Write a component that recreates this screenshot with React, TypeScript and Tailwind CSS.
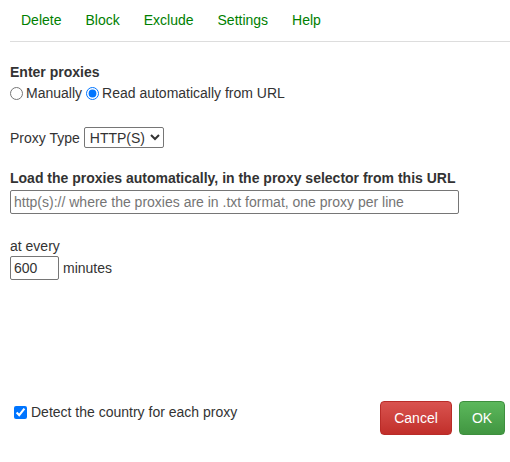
import React, { useState } from 'react';

const menu = ['Delete', 'Block', 'Exclude', 'Settings', 'Help'];

export default function App() {
  const [mode, setMode] = useState<'manual' | 'url'>('url');
  const [type, setType] = useState('HTTP(S)');
  const [url, setUrl] = useState('');
  const [minutes, setMinutes] = useState('600');
  const [detect, setDetect] = useState(true);

  return (
    <div className="w-[510px] h-[462px] bg-white text-[14px] text-[#333] font-['Liberation_Sans',Arial,sans-serif] leading-[20px]">
      {/* top menu */}
      <div className="ml-[10px] border-b border-[#ddd] h-[42px] flex items-center pl-[11px] gap-[24px] pb-[2px]">
        {menu.map((m) => (
          <a key={m} href="#" className="text-[#008000] hover:underline" onClick={(e) => e.preventDefault()}>
            {m}
          </a>
        ))}
      </div>

      <div className="pl-[10px] pr-[5px]">
        <div className="mt-[20px] font-bold">Enter proxies</div>
        <div className="flex items-center h-[20px] mt-[1px]">
          <label className="flex items-center">
            <input
              type="radio"
              name="mode"
              className="m-0 w-[13px] h-[13px]"
              checked={mode === 'manual'}
              onChange={() => setMode('manual')}
            />
            <span className="ml-[3px]">Manually</span>
          </label>
          <label className="flex items-center ml-[4px]">
            <input
              type="radio"
              name="mode"
              className="m-0 w-[13px] h-[13px]"
              checked={mode === 'url'}
              onChange={() => setMode('url')}
            />
            <span className="ml-[3px]">Read automatically from URL</span>
          </label>
        </div>

        <div className="flex items-center mt-[24px] h-[21px]">
          <span>Proxy Type</span>
          <select
            value={type}
            onChange={(e) => setType(e.target.value)}
            className="ml-[4px] h-[21px] w-[80px] border border-[#767676] rounded-[2px] text-[14px] pl-[1px]"
          >
            <option>HTTP(S)</option>
            <option>SOCKS4</option>
            <option>SOCKS5</option>
          </select>
        </div>

        <div className="mt-[20px] font-bold">Load the proxies automatically, in the proxy selector from this URL</div>
        <input
          type="text"
          value={url}
          onChange={(e) => setUrl(e.target.value)}
          placeholder="http(s):// where the proxies are in .txt format, one proxy per line"
          className="mt-[2px] block w-[449px] h-[24px] border border-[#767676] rounded-[2px] px-[3px] text-[14px] placeholder:text-[#757575]"
        />

        <div className="mt-[22px]">at every</div>
        <div className="flex items-center">
          <input
            type="text"
            value={minutes}
            onChange={(e) => setMinutes(e.target.value)}
            className="block w-[49px] h-[24px] border border-[#767676] rounded-[2px] px-[3px] text-[14px]"
          />
          <span className="ml-[4px]">minutes</span>
        </div>

        <div className="mt-[121px] flex items-start justify-between">
          <label className="flex items-center ml-[4px] mt-[1px]">
            <input
              type="checkbox"
              className="m-0 w-[13px] h-[13px]"
              checked={detect}
              onChange={(e) => setDetect(e.target.checked)}
            />
            <span className="ml-[4px]">Detect the country for each proxy</span>
          </label>
          <div className="flex gap-[7px]">
            <button className="h-[34px] w-[72px] rounded-[4px] border border-[#b92c28] text-white bg-gradient-to-b from-[#d9534f] to-[#c12e2a]">
              Cancel
            </button>
            <button className="h-[34px] w-[46px] rounded-[4px] border border-[#3e8f3e] text-white bg-gradient-to-b from-[#5cb85c] to-[#419641]">
              OK
            </button>
          </div>
        </div>
      </div>
    </div>
  );
}
